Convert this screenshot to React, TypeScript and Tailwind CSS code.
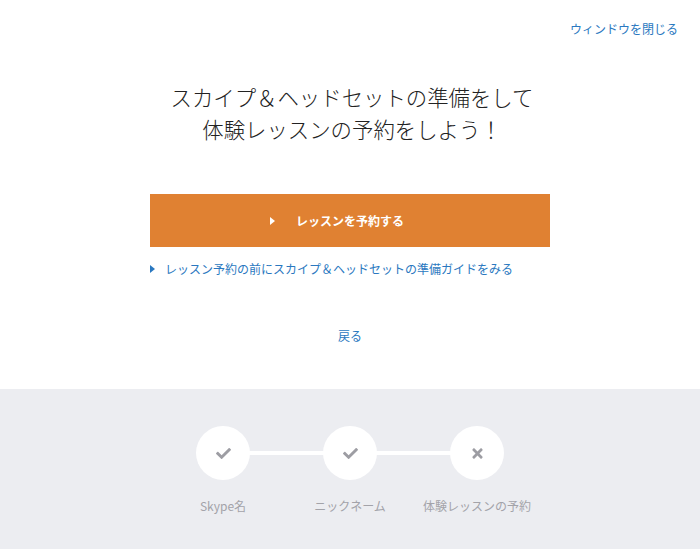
import React from "react";
import { FaCheck, FaTimes } from "react-icons/fa";

const font = { fontFamily: '"Noto Sans CJK JP", "Noto Sans", sans-serif' };

function Tri({ className }: { className: string }) {
  return (
    <svg width="5" height="8" viewBox="0 0 5 8" className={className}>
      <path d="M0 0 L5 4 L0 8 Z" fill="currentColor" />
    </svg>
  );
}

function Step({ label, done }: { label: string; done: boolean }) {
  return (
    <div className="relative z-10 flex w-[127px] flex-col items-center">
      <div className="flex h-[54px] w-[54px] items-center justify-center rounded-full bg-white text-[#9d9da3]">
        {done ? <FaCheck size={15} /> : <FaTimes size={15} />}
      </div>
      <div className="mt-[17px] whitespace-nowrap text-[12px] leading-[18px] text-[#a3a3a9]">{label}</div>
    </div>
  );
}

export default function App() {
  return (
    <div className="h-[549px] w-[700px] overflow-hidden bg-white" style={font}>
      <div className="h-[389px]">
        <div className="flex justify-end pr-[22px] pt-[20px]">
          <a className="text-[12px] leading-[18px] text-[#2a78c0]">ウィンドウを閉じる</a>
        </div>
        <h1 className="mt-[43px] pl-[4px] text-center text-[21.4px] font-light leading-[32px] text-[#222]">
          スカイプ＆ヘッドセットの準備をして
          <br />
          体験レッスンの予約をしよう！
        </h1>
        <div className="mx-auto mt-[49px] w-[400px]">
          <div className="flex h-[53px] items-center justify-center bg-[#e08132] text-white">
            <span className="relative text-[12px] font-bold leading-[18px]">
              <Tri className="absolute left-[-26px] top-[5px] text-white" />
              レッスンを予約する
            </span>
          </div>
          <div className="mt-[13px] flex items-center">
            <Tri className="text-[#2a78c0]" />
            <span className="ml-[10px] text-[12px] leading-[18px] text-[#2a78c0]">
              レッスン予約の前にスカイプ＆ヘッドセットの準備ガイドをみる
            </span>
          </div>
        </div>
        <div className="mt-[49px] text-center text-[12px] leading-[18px] text-[#2a78c0]">戻る</div>
      </div>
      <div className="h-[160px] bg-[#ecedf1] pt-[37px]">
        <div className="relative mx-auto flex w-[381px] justify-center">
          <div className="absolute left-[63px] right-[63px] top-[25px] h-[4px] bg-white" />
          <Step label="Skype名" done />
          <Step label="ニックネーム" done />
          <Step label="体験レッスンの予約" done={false} />
        </div>
      </div>
    </div>
  );
}
